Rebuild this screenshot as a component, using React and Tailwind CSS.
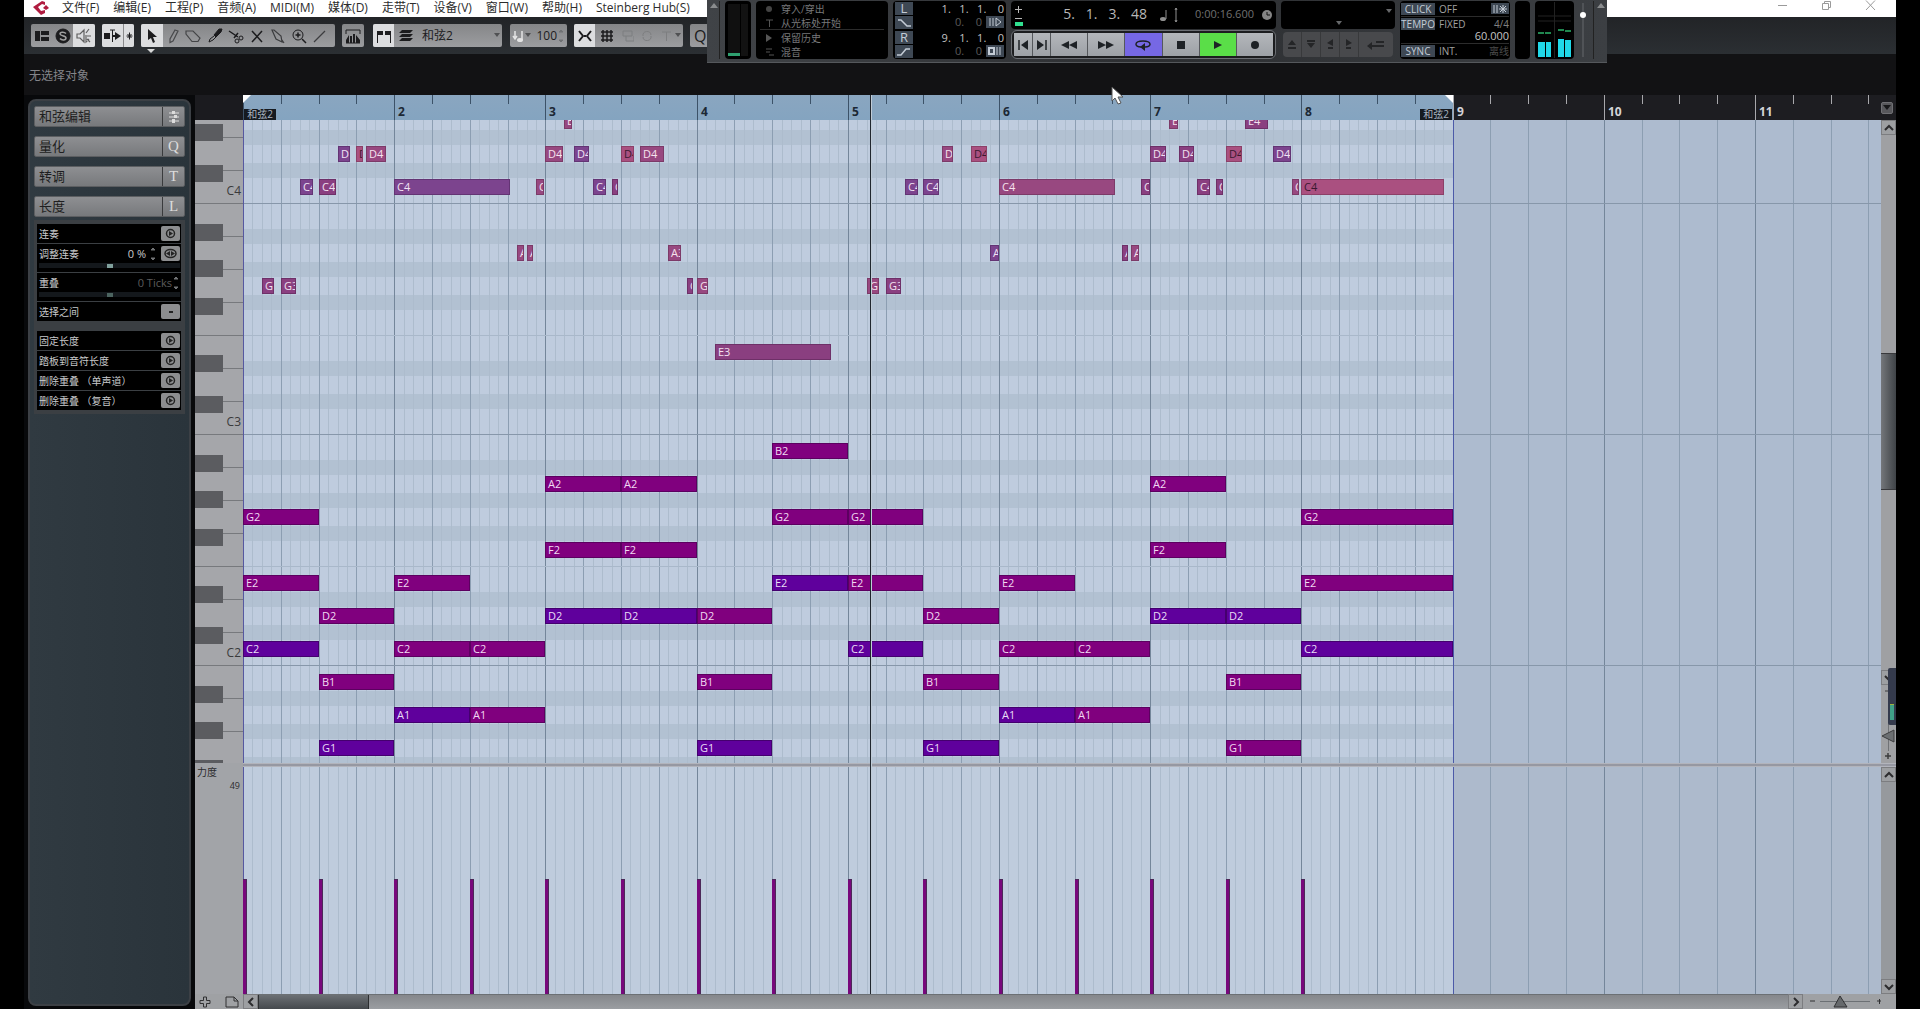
import { useState } from "react";

const STEP = 9.45; // width of one 16th
const toX = (n) => Math.round(n * STEP);
const LOOP_END = 128;
const PLAYHEAD = 66.3;

const MENU = [
  "文件(F)", "编辑(E)", "工程(P)", "音频(A)", "MIDI(M)", "媒体(D)",
  "走带(T)", "设备(V)", "窗口(W)", "帮助(H)", "Steinberg Hub(S)",
];

const ROWS = [
  "E4", "D4", "C4", "B3", "A3", "G3", "F3", "E3", "D3", "C3",
  "B2", "A2", "G2", "F2", "E2", "D2", "C2", "B1", "A1", "G1",
];

// where the black key starts inside the white key above the boundary
const BLACK_TOP = {
  E: "top-[19px]",
  D: "top-[27px]",
  B: "top-[20px]",
  A: "top-[23px]",
  G: "top-[28px]",
};

const COLORS = {
  m: "bg-[#80007e] text-[#f0d8f2] border-[#5c0060]",
  b: "bg-[#5f009c] text-[#e8dcf6] border-[#44006e]",
  v: "bg-[#7c448e] text-[#f0e2f4] border-[#633474]",
  p: "bg-[#8a3f80] text-[#f2e0f0] border-[#6e3068]",
  r: "bg-[#984880] text-[#f6e2ee] border-[#7c3a68]",
  k: "bg-[#aa5080] text-[#3a1830] border-[#8c4068]",
};

// row: [start, length, colour], both counted in 16ths
const NOTES = {
  E4: [[34, 0.8, "r"], [98, 0.9, "r"], [106, 2.45, "p"]],
  D4: [
    [10, 1.3, "v"], [12, 0.65, "k"], [13, 2.1, "r"], [32, 1.9, "r"], [35, 1.65, "v"],
    [40, 1.4, "k"], [42, 2.55, "r"], [74, 1.1, "r"], [77, 1.7, "k"], [96, 1.7, "p"],
    [99, 1.6, "p"], [104, 1.75, "k"], [109, 1.95, "v"],
  ],
  C4: [
    [6, 1.4, "v"], [8, 1.8, "p"], [16, 12.3, "v"], [31, 0.8, "r"], [37, 1.4, "v"],
    [39, 0.65, "p"], [70, 1.45, "v"], [72, 1.6, "v"], [80, 12.3, "r"], [95, 1, "p"],
    [101, 1.3, "p"], [103, 0.7, "p"], [111, 0.7, "r"], [112, 15.1, "k"],
  ],
  A3: [[29, 0.75, "r"], [30, 0.65, "r"], [45, 1.35, "r"], [79, 1, "v"], [93, 0.65, "p"], [94, 0.85, "r"]],
  G3: [[2, 1.3, "p"], [4, 1.6, "p"], [47, 0.65, "p"], [48, 1.2, "r"], [66, 1.3, "r"], [68, 1.6, "p"]],
  E3: [[50, 12.2, "p"]],
  B2: [[56, 8, "m"]],
  A2: [[32, 8, "m"], [40, 8, "m"], [96, 8, "m"]],
  G2: [[0, 8, "m"], [56, 8, "m"], [64, 8, "m"], [112, 16, "m"]],
  F2: [[32, 8, "m"], [40, 8, "m"], [96, 8, "m"]],
  E2: [[0, 8, "m"], [16, 8, "m"], [56, 8, "b"], [64, 8, "m"], [80, 8, "m"], [112, 16, "m"]],
  D2: [
    [8, 8, "m"], [32, 8, "b"], [40, 8, "b"], [48, 8, "m"], [72, 8, "m"], [96, 8, "b"], [104, 8, "b"],
  ],
  C2: [
    [0, 8, "b"], [16, 8, "m"], [24, 8, "m"], [64, 8, "b"], [80, 8, "m"], [88, 8, "m"], [112, 16, "b"],
  ],
  B1: [[8, 8, "m"], [48, 8, "m"], [72, 8, "m"], [104, 8, "m"]],
  A1: [[16, 8, "b"], [24, 8, "m"], [80, 8, "b"], [88, 8, "m"]],
  G1: [[8, 8, "b"], [48, 8, "b"], [72, 8, "b"], [104, 8, "m"]],
};

const BARS = Array.from({ length: 16 }, (_, i) => i);
const HITS = Array.from({ length: 15 }, (_, i) => i * 8);

function Icon({ w = 16, h = 16, children, className = "" }) {
  return (
    <svg
      width={w}
      height={h}
      viewBox={`0 0 ${w} ${h}`}
      fill="none"
      stroke="currentColor"
      className={`shrink-0 ${className}`}
      aria-hidden="true"
    >
      {children}
    </svg>
  );
}

function Tool({ label, active, className = "w-[21px]", children }) {
  return (
    <button
      aria-label={label}
      className={`flex h-full shrink-0 items-center justify-center ${
        active ? "bg-[#dcdddf]" : ""
      } ${className}`}
    >
      {children}
    </button>
  );
}

function Group({ children, className = "" }) {
  return (
    <div
      className={`flex h-[23px] shrink-0 items-center overflow-hidden rounded-xs bg-linear-to-b from-[#858688] to-[#9c9da0] text-[#1c1c1e] ${className}`}
    >
      {children}
    </div>
  );
}

function MenuBar() {
  return (
    <header className="flex h-[17px] shrink-0 items-start bg-white pl-2 text-[#2c2c2c]">
      <Icon w={18} h={15} className="mt-px">
        <path d="M13 1 L10 0 L1 6 L9 14 L13 12 L13 9 L9 10 L6 6 L10 3 L13 4 Z" fill="#b01c40" stroke="none" />
        <path d="M14 4 L17 7 L14 9 L11 7 Z" fill="#b01c40" stroke="none" />
      </Icon>
      <nav className="ml-3 flex gap-[14px] text-[12px] leading-[15px] whitespace-nowrap">
        {MENU.map((m) => (
          <button key={m}>{m}</button>
        ))}
      </nav>
      <div className="ml-auto flex gap-[33px] pr-5 text-[#9a9a9a]">
        <button aria-label="最小化">
          <Icon w={11} h={12}><path d="M1 5.5H10" /></Icon>
        </button>
        <button aria-label="还原">
          <Icon w={11} h={12}><path d="M1.5 3.5h6v6h-6zM3.5 3.500V1.500h6v6H7.500" /></Icon>
        </button>
        <button aria-label="关闭">
          <Icon w={11} h={12}><path d="M1 0.500L10 10M10 0.500L1 10" /></Icon>
        </button>
      </div>
    </header>
  );
}

function Toolbar() {
  return (
    <div className="flex h-[37px] shrink-0 items-start gap-[7px] bg-linear-to-b from-[#222427] to-[#2b2f33] pt-[7px] pl-[7px]">
      <Group className="w-16">
        <Tool label="设置窗口布局">
          <Icon><path d="M1 3h5v10h-5zM7 3h8v4h-8zM7 9h8v4h-8z" fill="currentColor" stroke="none" /></Icon>
        </Tool>
        <Tool label="独奏编辑器">
          <Icon>
            <circle cx="8" cy="8" r="7" fill="#1c1c1e" />
            <path d="M11 5.500C9 3.500 5 4 5 6s6 1.500 6 4-4.500 2.500-6 0.500" stroke="#a0a0a0" strokeWidth="1.500" />
          </Icon>
        </Tool>
        <Tool label="声学反馈" active className="w-[22px]">
          <Icon className="text-[#606060]">
            <path d="M1 6h3l4-4v12l-4-4H1zM10 5l3-4M11 8h4M11 11l3 3M10 7v7l3-3" strokeWidth="1.200" />
          </Icon>
        </Tool>
      </Group>
      <Group className="w-8">
        <Tool label="自动滚动" active>
          <Icon w={18}><path d="M0 5h6v6h-6zM11 4l6 4-6 4zM8 7h3v2h-3z" fill="currentColor" stroke="none" /><path d="M6 2h5M8.500 2v12" /></Icon>
        </Tool>
        <Tool label="滚动选项" active className="w-[11px] border-l border-[#8a8a8c]">
          <Icon w={7} h={8}><path d="M3.500 0.500v7M0.500 4h6M1.500 2l4 4M5.500 2l-4 4" /></Icon>
        </Tool>
      </Group>
      <div className="relative">
        <Group className="w-[194px]">
          <Tool label="对象选择" active className="w-[22px]">
            <Icon w={12}><path d="M2 1v11l3-2 2 5 2-1-2-5h4z" fill="currentColor" stroke="none" /></Icon>
          </Tool>
          <Tool label="画笔" className="w-[19px]">
            <Icon w={14} className="text-[#48494b]"><path d="M9 2l3 1-5 10-3 1.500V11z" strokeWidth="1.200" /></Icon>
          </Tool>
          <Tool label="橡皮擦" className="w-[22px]">
            <Icon w={18} className="text-[#444547]"><path d="M2 3h7l7 7-2 3.500H8L2 6z" strokeWidth="1.200" /></Icon>
          </Tool>
          <Tool label="修剪" className="w-[21px]">
            <Icon><path d="M15 1l-3 0-5 6 2 2 5-5z" fill="currentColor" /><path d="M7 8l-4 3-1 3 4-2 3-3" /></Icon>
          </Tool>
          <Tool label="分割">
            <Icon><path d="M1 3l9 6M6 10l4-5" strokeWidth="1.500" /><circle cx="13" cy="10" r="2" /><circle cx="9" cy="13" r="2" /></Icon>
          </Tool>
          <Tool label="静音"><Icon><path d="M3 3l10 11M13 3L3 14" strokeWidth="1.500" /></Icon></Tool>
          <Tool label="胶合">
            <Icon className="text-[#3c3d3f]"><path d="M2 2l2 0 7 6 1 6-6-3zM12 12l2 3" strokeWidth="1.200" /></Icon>
          </Tool>
          <Tool label="缩放">
            <Icon><circle cx="7" cy="7" r="5" /><path d="M7 4.500v5M4.500 7h5M11 11l4 4" strokeWidth="1.500" /></Icon>
          </Tool>
          <Tool label="直线"><Icon className="text-[#3c3d3f]"><path d="M2 14L13 3" strokeWidth="1.200" /></Icon></Tool>
        </Group>
        <Icon w={8} h={5} className="absolute top-[25px] left-[6px]">
          <path d="M0 0h8L4 4z" fill="#d8d8d8" stroke="none" />
        </Icon>
      </div>
      <Group className="w-[22px]">
        <Tool label="显示控制器">
          <Icon w={18} h={18}>
            <path d="M2 7V3h14v4M2 16h14" />
            <path d="M2 13l3-5v8h-3zM6 9h2v7h-2zM9 7h2v9h-2zM12 8l4 5v3h-4z" fill="currentColor" stroke="none" />
          </Icon>
        </Tool>
      </Group>
      <Group className="ml-[2px] w-[129px]">
        <Tool label="显示部分边界" active>
          <Icon><path d="M1 3h6v4h-5v8h-1zM9 3h6v12h-1v-8h-5z" fill="currentColor" stroke="none" /></Icon>
        </Tool>
        <Tool label="编辑活动部分" className="w-6">
          <Icon><path d="M4 2h11l-3 3H1zM4 6h11l-3 3H1zM4 10h11l-3 3H1z" fill="currentColor" stroke="none" /></Icon>
        </Tool>
        <select aria-label="当前部分" className="h-full min-w-0 flex-1 appearance-none pl-1 text-[12px]">
          <option>和弦2</option>
        </select>
        <Caret />
      </Group>
      <Group className="ml-px w-[57px] gap-px px-[2px]">
        <Icon w={12}>
          <path d="M3 3v7M1 8l2 3 2-3M10 3v9" stroke="#e4e4e4" strokeWidth="1.500" />
          <ellipse cx="8" cy="12" rx="3" ry="2" fill="#e4e4e4" stroke="none" />
        </Icon>
        <Caret />
        <input aria-label="插入力度" defaultValue="100" className="min-w-0 flex-1 bg-transparent text-right text-[12px]" />
        <Spin />
      </Group>
      <Group className="w-[109px]">
        <Tool label="吸附" active>
          <Icon><path d="M2 3l4 5-4 5M14 3l-4 5 4 5M8 7v2" strokeWidth="2" /></Icon>
        </Tool>
        <Tool label="网格" className="w-6">
          <Icon><path d="M4 2v12M8 2v12M12 2v12M2 4h12M2 8h12M2 12h12" strokeWidth="1.500" /></Icon>
        </Tool>
        <div className="flex flex-1 items-center justify-around text-[#7d7e80]">
          <Icon w={12}><path d="M1 3h9v5h-9zM4 8v5h8V8" /></Icon>
          <Icon w={12}><path d="M2 8a4 4 0 0 1 8-1M10 8a4 4 0 0 1-8 1" /></Icon>
          <Icon w={12}><path d="M2 4h9M6.500 4v9" /></Icon>
        </div>
        <Caret />
      </Group>
      <Group className="w-8 pl-1 text-[16px] leading-[20px]">
        <button>Q</button>
      </Group>
    </div>
  );
}

function Caret() {
  return (
    <Icon w={7} h={5} className="mr-px">
      <path d="M0 0h6L3 4z" fill="#505153" stroke="none" />
    </Icon>
  );
}

function Spin() {
  return (
    <Icon w={7} h={14} className="text-[#707274]">
      <path d="M1 3l2-2 2 2zM1 11h4l-2 2z" fill="currentColor" />
    </Icon>
  );
}

const LCD = "rounded-sm bg-black";
const TAG = "flex items-center justify-center bg-[#3e4854] text-[#c4ccd6]";

function Locator({ name, value, curve, children }) {
  return (
    <div className="flex h-[28px] gap-1">
      <div className="flex w-[18px] flex-col gap-px">
        <button className={`${TAG} h-[13px] text-[13px] leading-[13px]`}>{name}</button>
        <button aria-label={`${name} 预卷`} className={`${TAG} h-[13px]`}>
          <Icon w={14} h={10}><path d={curve} strokeWidth="1.500" /></Icon>
        </button>
      </div>
      <div className="flex flex-1 flex-col text-right text-[11px] leading-[13px] whitespace-pre">
        <span className="text-[#c0c0c0]">{value}</span>
        <span className="flex items-center justify-end gap-1 text-[#5c5c5c]">
          0.{"    "}0
          <button aria-label={`${name} 开关`} className={`${TAG} h-3 w-[18px]`}>{children}</button>
        </span>
      </div>
    </div>
  );
}

function Transport() {
  const [playing, setPlaying] = useState(true);
  const [cycle, setCycle] = useState(true);
  const key =
    "flex h-full items-center justify-center border-r border-[#55585c] text-[#1e2226] last:border-r-0";
  const plain = "bg-linear-to-b from-[#b4b7bb] to-[#9da1a6]";

  return (
    <section
      aria-label="走带控制"
      className="absolute top-0 left-[707px] z-30 flex h-[63px] w-[900px] gap-[5px] border-b border-[#55585c] bg-linear-to-r from-[#404347] via-[#2c2e31] to-[#3c3f43] pt-px pb-[3px]"
    >
      <div className="w-[13px] border-r border-[#222]">
        <Icon w={8} h={8} className="ml-[3px]"><path d="M0 7h8L4 2z" fill="#8a8c8e" stroke="none" /></Icon>
      </div>
      <div className={`${LCD} flex w-[26px] items-end gap-px p-[3px]`}>
        <div className="flex h-full w-3 items-end bg-[#101010]">
          <div className="h-[3px] w-full bg-[#2fa070]" />
        </div>
        <div className="h-full flex-1 bg-[#121212]" />
      </div>
      <div className={`${LCD} flex w-[132px] flex-col px-1 text-[10px] leading-[14px] text-[#77787a]`}>
        <div className="flex h-[15px] items-center gap-[5px] pt-px pl-1">
          <Icon w={12} h={10}><circle cx="5" cy="5" r="3" fill="#444" stroke="none" /></Icon>穿入/穿出
        </div>
        <div className="flex h-[14px] items-center gap-[5px] border-b border-[#2c2c2c] pl-1">
          <Icon w={12} h={10} className="text-[#555]"><path d="M2 2h7M5.500 2v7" /></Icon>从光标处开始
        </div>
        <div className="flex h-[15px] items-center gap-[5px] pl-1">
          <Icon w={12} h={10}><path d="M2 1l6 4-6 4z" fill="#555" stroke="none" /></Icon>保留历史
        </div>
        <div className="flex h-[14px] items-center gap-[5px] pl-1">
          <Icon w={12} h={10} className="text-[#555]"><path d="M2 2h6M2 5h4M5 8h5" /></Icon>混音
        </div>
      </div>
      <div className={`${LCD} flex w-[113px] flex-col gap-px px-[2px] pt-px`}>
        <Locator name="L" value="1.   1.   1.    0" curve="M1 2h3l6 6h4">
          <Icon w={14} h={10}><path d="M2 1v8M5 1v8M8 1v8l5-4z" /></Icon>
        </Locator>
        <Locator name="R" value="9.   1.   1.    0" curve="M0 8h4l5-6h4">
          <Icon w={14} h={10}><path d="M1 2h5v6h-5z" strokeWidth="2" /><path d="M9 1v8M12 1v8" /></Icon>
        </Locator>
      </div>
      <div className="flex w-[265px] flex-col gap-px">
        <div className={`${LCD} flex h-[28px] items-center gap-3 px-1 text-[#b8b8b8]`}>
          <Icon w={8} h={28}>
            <path d="M0 8.500h7M3.500 5v7M0 17.500h7" />
            <path d="M0 21h8v4h-8z" fill="#30e090" stroke="none" />
          </Icon>
          <span className="ml-auto pb-[3px] text-[14px] leading-[20px] whitespace-pre">5.   1.   3.   48</span>
          <Icon w={20} h={20}>
            <ellipse cx="4" cy="14" rx="3" ry="2" fill="#909090" stroke="none" />
            <path d="M7 14V5M17 3v14M16 5l1-2 1 2M16 15l1 2 1-2" stroke="#909090" />
          </Icon>
          <span className="pr-1 pb-[2px] pl-1 text-[11px] leading-[14px] text-[#707070]">0:00:16.600</span>
          <Icon w={10} h={10} className="-ml-2">
            <circle cx="5" cy="5" r="5" fill="#858585" stroke="none" />
            <path d="M5 2v3h3" stroke="#111" />
          </Icon>
        </div>
        <div className="flex h-[29px] rounded-md border border-[#6c6f74] bg-[#1c1d1f] p-[2px]">
          <button aria-label="上一标记" className={`${key} ${plain} w-[19px]`}>
            <Icon w={12} h={10}><path d="M2 0v10" strokeWidth="1.500" /><path d="M11 0v10L4 5z" fill="currentColor" stroke="none" /></Icon>
          </button>
          <button aria-label="下一标记" className={`${key} ${plain} w-[18px]`}>
            <Icon w={12} h={10}><path d="M10 0v10" strokeWidth="1.500" /><path d="M1 0v10l7-5z" fill="currentColor" stroke="none" /></Icon>
          </button>
          <button aria-label="倒带" className={`${key} ${plain} flex-1`}>
            <Icon w={16} h={8}><path d="M8 0v8L0 4zM16 0v8L8 4z" fill="currentColor" stroke="none" /></Icon>
          </button>
          <button aria-label="快进" className={`${key} ${plain} flex-1`}>
            <Icon w={16} h={8}><path d="M0 0v8l8-4zM8 0v8l8-4z" fill="currentColor" stroke="none" /></Icon>
          </button>
          <button
            aria-label="循环"
            onClick={() => setCycle(!cycle)}
            className={`${key} flex-1 ${cycle ? "bg-[#7668e4]" : plain}`}
          >
            <Icon w={16} h={12}>
              <path d="M6 8C-1 8-1 2 8 2s9 6 2 6" strokeWidth="1.500" />
              <path d="M5 8l5-4v8z" fill="currentColor" stroke="none" />
            </Icon>
          </button>
          <button aria-label="停止" onClick={() => setPlaying(false)} className={`${key} ${plain} flex-1`}>
            <Icon w={8} h={8}><path d="M0 0h8v8h-8z" fill="currentColor" stroke="none" /></Icon>
          </button>
          <button
            aria-label="播放"
            onClick={() => setPlaying(true)}
            className={`${key} flex-1 ${playing ? "bg-[#5ade48]" : plain}`}
          >
            <Icon w={8} h={8}><path d="M0 0v8l8-4z" fill="currentColor" stroke="none" /></Icon>
          </button>
          <button aria-label="录音" className={`${key} ${plain} flex-1`}>
            <Icon w={8} h={8}><circle cx="4" cy="4" r="4" fill="currentColor" stroke="none" /></Icon>
          </button>
        </div>
      </div>
      <div className="flex w-[114px] flex-col gap-[3px]">
        <div className={`${LCD} flex h-[28px] items-end justify-end pr-px`}>
          <Icon w={60} h={26}><path d="M52 6h6l-3 4zM2 18h6l-3 4z" fill="#66686a" stroke="none" /></Icon>
        </div>
        <div className="mx-[2px] flex h-[25px] rounded-sm bg-[#48494c] text-[#242527]">
          {[
            ["上移", "M1 6h8L5 1zM1 8h8v2h-8z"],
            ["下移", "M1 1h8v2h-8zM1 4h8l-4 5z"],
            ["左移", "M8 0v7L2 4zM3 8h5v2h-5z"],
            ["右移", "M2 0v7l6-3zM2 8h5v2h-5z"],
          ].map(([label, d]) => (
            <button key={label} aria-label={label} className="flex w-[19px] items-center justify-center border-r border-[#38393b]">
              <Icon w={10} h={11}><path d={d} fill="currentColor" stroke="none" /></Icon>
            </button>
          ))}
          <button aria-label="返回" className="flex flex-1 items-center justify-center">
            <Icon w={18} h={10}><path d="M3 6h14M9 2h8" strokeWidth="2" /><path d="M0 6l5-4v8z" fill="currentColor" stroke="none" /></Icon>
          </button>
        </div>
      </div>
      <div className={`${LCD} flex w-[110px] flex-col px-px pt-[2px] text-[10px] leading-[12px] text-[#a0a0a0]`}>
        <div className="flex h-[14px] items-start gap-1 border-b border-[#2c2c2c]">
          <button className={`${TAG} h-3 w-[34px]`}>CLICK</button>OFF
          <button aria-label="预备拍" className={`${TAG} ml-auto h-[11px] w-[18px]`}>
            <Icon w={16} h={10}><path d="M2 1v8M5 1v8M11 1v8M7 5h8M8 2l6 6M14 2l-6 6" /></Icon>
          </button>
        </div>
        <div className="flex h-[27px] items-start gap-1 border-b border-[#2c2c2c] pt-px">
          <button className={`${TAG} h-3 w-[34px]`}>TEMPO</button>FIXED
          <div className="ml-auto flex flex-col text-right">
            <span className="text-[#808080]">4/4</span>
            <span className="text-[11px] text-[#c4c4c4]">60.000</span>
          </div>
        </div>
        <div className="flex items-start gap-1 pt-px">
          <button className={`${TAG} h-3 w-[34px]`}>SYNC</button>INT.
          <span className="ml-auto text-[#4c4c4c]">离线</span>
        </div>
      </div>
      <div className={`${LCD} w-[15px]`} />
      <div className={`${LCD} w-[39px]`}>
        <svg viewBox="0 0 39 58" className="h-full w-full" aria-hidden="true">
          <path d="M3 15h33M3 20h33M19.500 1v56" stroke="#222" />
          <path d="M3 41h7v15H3zM11 41h5v15h-5zM23 38h6v18h-6zM30 39h6v17h-6z" fill="#20d8e8" />
          <path d="M3 32h6M10 32h6M23 29h6M30 30h6" stroke="#208850" strokeWidth="2" />
        </svg>
      </div>
      <div className="flex flex-1">
        <Icon w={10} h={58}>
          <path d="M4 2v54" stroke="#66686c" />
          <circle cx="4" cy="14" r="3" fill="#fff" stroke="none" />
        </Icon>
        <div className="ml-1 flex-1 border-l border-[#222]">
          <Icon w={8} h={8} className="mx-auto"><path d="M0 7h8L4 2z" fill="#8a8c8e" stroke="none" /></Icon>
        </div>
      </div>
    </section>
  );
}

function RoundButton({ label, kind = "play" }) {
  return (
    <button
      aria-label={label}
      className="flex h-[15px] w-[19px] shrink-0 items-center justify-center rounded-xs bg-[#8c8d8f] text-[#242424]"
    >
      {kind === "play" && (
        <Icon w={11} h={11}><circle cx="5.500" cy="5.500" r="4" strokeWidth="1.500" /><path d="M4 3l4 2.500L4 8z" fill="currentColor" stroke="none" /></Icon>
      )}
      {kind === "both" && (
        <Icon w={13} h={11}><ellipse cx="6.500" cy="5.500" rx="5.500" ry="4" strokeWidth="1.500" /><path d="M6 3v5L2 5.500zM7 3v5l4-2.500z" fill="currentColor" stroke="none" /></Icon>
      )}
      {kind === "menu" && <span className="h-[2px] w-1 bg-[#242424]" />}
    </button>
  );
}

const RANGE =
  "h-[5px] w-full appearance-none bg-[#14181c] [&::-webkit-slider-thumb]:h-1 [&::-webkit-slider-thumb]:w-[6px] [&::-webkit-slider-thumb]:appearance-none";

function Inspector() {
  return (
    <aside className="flex w-[171px] shrink-0 bg-[#08090b] pt-1 pr-1 pb-[3px] pl-1">
      <div className="flex flex-1 flex-col rounded-lg border-2 border-[#3c4045] bg-linear-to-r from-[#303a41] to-[#2a343b] px-1 pt-[5px]">
        <div className="flex flex-col gap-[9px]">
          {[["和弦编辑", ""], ["量化", "Q"], ["转调", "T"], ["长度", "L"]].map(([name, mark]) => (
            <button
              key={name}
              className="flex h-[21px] items-center rounded-xs border border-[#5c5e61] bg-linear-to-b from-[#8e8f92] to-[#77797c] text-[#1e1e20]"
            >
              <span className="flex-1 pl-1 text-left text-[13px] leading-[19px]">{name}</span>
              <span className="flex h-full w-[22px] items-center justify-center border-l border-[#3a3b3d] font-['Liberation_Serif',serif] text-[15px] text-[#dcdcdc]">
                {mark || (
                  <Icon w={12} h={14}>
                    <path d="M1 3h10M1 7h10M1 11h10" />
                    <path d="M4 1h3v3h-3zM6 5h3v3h-3zM4 9h3v4h-3z" fill="currentColor" stroke="none" />
                  </Icon>
                )}
              </span>
            </button>
          ))}
        </div>
        <div className="mt-[3px] flex flex-col gap-[10px] bg-[#3b3f43] py-1 pr-1 pl-[3px] text-[10px] leading-[14px] text-[#c8cacc]">
          <div className="flex flex-col gap-px">
            <div className="flex h-[19px] items-center justify-between bg-black pr-px pl-[2px]">
              连奏
              <RoundButton label="应用连奏" />
            </div>
            <div className="flex h-7 flex-col bg-black pr-px pl-[2px]">
              <div className="flex h-[19px] items-center gap-1">
                <label htmlFor="legato" className="flex-1">调整连奏</label>
                <span className="text-[11px]">0 %</span>
                <Spin />
                <RoundButton label="连奏方向" kind="both" />
              </div>
              <input id="legato" type="range" className={`${RANGE} [&::-webkit-slider-thumb]:bg-[#80a09c]`} />
            </div>
            <div className="flex h-7 flex-col bg-black pr-px pl-[2px]">
              <div className="flex h-[19px] items-center gap-px">
                <label htmlFor="overlap" className="flex-1">重叠</label>
                <span className="text-[11px] text-[#5c5c5c]">0 Ticks</span>
                <Spin />
              </div>
              <input id="overlap" type="range" className={`${RANGE} [&::-webkit-slider-thumb]:bg-[#4c6460]`} />
            </div>
            <div className="flex h-[19px] items-center justify-between bg-black pr-px pl-[2px]">
              选择之间
              <RoundButton label="选择之间" kind="menu" />
            </div>
          </div>
          <div className="flex flex-col gap-px">
            {["固定长度", "踏板到音符长度", "删除重叠 （单声道）", "删除重叠 （复音）"].map((t) => (
              <div key={t} className="flex h-[19px] items-center justify-between bg-black pr-px pl-[2px]">
                {t}
                <RoundButton label={t} />
              </div>
            ))}
          </div>
        </div>
      </div>
    </aside>
  );
}

function Ruler() {
  return (
    <div className="relative h-full flex-1 overflow-hidden bg-[#1d1d21]">
      <div
        className="absolute inset-y-0 left-0 bg-linear-to-b from-[#8aa6c0] to-[#84a4c0]"
        style={{ width: toX(LOOP_END) }}
      />
      {BARS.map((bar) => {
        const inLoop = bar < 8;
        return (
          <div key={bar}>
            {[0, 1, 2, 3].map((beat) => (
              <div
                key={beat}
                className={`absolute top-0 w-px ${beat === 0 ? "h-full" : "h-[9px]"} ${
                  inLoop ? "bg-[#3c5268]" : "bg-[#a8a8ac]"
                }`}
                style={{ left: toX(bar * 16 + beat * 4) }}
              />
            ))}
            {bar > 0 && (
              <span
                className={`absolute top-[9px] pl-1 text-[12px] leading-[16px] font-bold ${
                  inLoop ? "text-[#1c2834]" : "text-[#d4d4d8]"
                }`}
                style={{ left: toX(bar * 16) }}
              >
                {bar + 1}
              </span>
            )}
          </div>
        );
      })}
      <span className="absolute bottom-0 left-px w-8 bg-[#151a20] text-center text-[10px] leading-[11px] text-[#a8b4c0]">
        和弦2
      </span>
      <span
        className="absolute bottom-0 w-8 -translate-x-full bg-[#151a20] text-center text-[10px] leading-[11px] text-[#a8b4c0]"
        style={{ left: toX(LOOP_END) - 1 }}
      >
        和弦2
      </span>
      <Icon w={8} h={8} className="absolute top-0 left-0"><path d="M0 0h8L0 8z" fill="#fff" stroke="none" /></Icon>
      <svg width="8" height="8" className="absolute top-0 -translate-x-full" style={{ left: toX(LOOP_END) }} aria-hidden="true">
        <path d="M0 0h8v8z" fill="#fff" />
      </svg>
    </div>
  );
}

function GridLines() {
  const lines = [];
  for (let i = 0; i < BARS.length * 16; i++) {
    const beat = i % 4 === 0;
    if (!beat && i > LOOP_END) continue;
    lines.push(
      <div
        key={i}
        className={`absolute inset-y-0 w-px ${
          i % 16 === 0 ? "bg-[#74869a]" : beat ? "bg-[#8c9eb2]" : "bg-[#adbccd]"
        }`}
        style={{ left: toX(i) }}
      />
    );
  }
  return lines;
}

function LoopEdges() {
  return (
    <>
      <div className="absolute inset-y-0 left-0 w-px bg-[#5658a0]" />
      <div className="absolute inset-y-0 w-px bg-[#4c5aa8]" style={{ left: toX(LOOP_END) }} />
    </>
  );
}

function Note({ name, start, length, color }) {
  const left = toX(start);
  return (
    <div
      className={`absolute top-[8px] z-10 h-4 overflow-hidden border pl-[2px] text-[11px] leading-[14px] ${COLORS[color]}`}
      style={{ left, width: toX(start + length) - left }}
    >
      {name}
    </div>
  );
}

function NoteGrid() {
  return (
    <div className="relative flex-1 overflow-hidden bg-[#adbbcf]">
      <div className="absolute inset-y-0 left-0 bg-[#bfccde]" style={{ width: toX(LOOP_END) }} />
      <div className="absolute inset-x-0 top-0 -mt-[15px]">
        {ROWS.map((row) => (
          <div key={row} className="relative h-[33px]">
            {BLACK_TOP[row[0]] && (
              <div className="absolute top-[25px] left-0 h-[15px] bg-[#b2c1d2]" style={{ width: toX(LOOP_END) }} />
            )}
          </div>
        ))}
      </div>
      <GridLines />
      <div className="absolute inset-x-0 top-0 -mt-[15px]">
        {ROWS.map((row) => (
          <div key={row} className="relative h-[33px]">
            {row[0] === "C" && <div className="absolute inset-x-0 bottom-0 h-px bg-[#8797aa]" />}
            {row[0] === "F" && (
              <div className="absolute bottom-0 left-0 h-px bg-[#a9b8ca]" style={{ width: toX(LOOP_END) }} />
            )}
            {(NOTES[row] || []).map(([start, length, color]) => (
              <Note key={start} name={row} start={start} length={length} color={color} />
            ))}
          </div>
        ))}
      </div>
      <LoopEdges />
    </div>
  );
}

function Piano() {
  return (
    <div className="w-12 shrink-0 overflow-hidden bg-[#a5a6aa]">
      <div className="-mt-[15px]">
        {ROWS.map((row) => {
          const black = BLACK_TOP[row[0]];
          return (
            <div key={row} className="relative h-[33px] border-b border-[#77797d]">
              {row[0] === "C" && (
                <span className="absolute right-[2px] bottom-[5px] text-[12px] leading-[15px] text-[#3a3a3c]">{row}</span>
              )}
              {black && <div className={`absolute left-0 z-10 h-[17px] w-7 bg-[#5b5c60] ${black}`} />}
            </div>
          );
        })}
      </div>
    </div>
  );
}

function VelocityLane() {
  return (
    <div className="relative flex-1 overflow-hidden bg-[#adbacc]">
      <div className="absolute inset-y-0 left-0 bg-[#bfccdd]" style={{ width: toX(LOOP_END) }} />
      <GridLines />
      <LoopEdges />
      {HITS.map((h) => (
        <div
          key={h}
          className="absolute bottom-0 h-[115px] w-[4px] border-t border-r border-[#4c2858] bg-[#78087c]"
          style={{ left: toX(h) }}
        />
      ))}
    </div>
  );
}

const CHEVRONS = {
  up: "M2 7l4-4 4 4",
  down: "M2 3l4 4 4-4",
  left: "M8 1L4 5l4 4",
  right: "M4 1l4 4-4 4",
};

function ScrollButton({ dir, label }) {
  return (
    <button
      aria-label={label}
      className="flex h-[15px] w-[15px] shrink-0 items-center justify-center border border-[#7c7d80] bg-[#9d9fa2] text-[#2c2c2e]"
    >
      <Icon w={12} h={10}><path d={CHEVRONS[dir]} strokeWidth="2" /></Icon>
    </button>
  );
}

function Editor() {
  return (
    <main className="relative flex min-w-0 flex-1 flex-col">
      <div className="flex h-[25px] shrink-0">
        <div className="w-12 shrink-0 bg-[#1b1b1f]" />
        <Ruler />
        <div className="flex w-[15px] items-center bg-[#1d1d21]">
          <button aria-label="标尺选项" className="flex h-3 w-3 items-center justify-center rounded-xs border border-[#707074] bg-[#58585c]">
            <Icon w={8} h={5}><path d="M0 0h8L4 5z" fill="#18181a" stroke="none" /></Icon>
          </button>
        </div>
      </div>

      <div className="flex min-h-0 flex-1">
        <Piano />
        <NoteGrid />
        <div className="relative flex w-[15px] flex-col bg-[#9fa0a3]">
          <ScrollButton dir="up" label="向上滚动" />
          <div className="flex-1">
            <div className="mt-[218px] h-[137px] border-y border-[#38393c] bg-linear-to-r from-[#74777b] to-[#3f4347]" />
          </div>
          <ScrollButton dir="down" label="向下滚动" />
          <Icon w={15} h={78} className="text-[#3c3c3e]">
            <path d="M4 6h6" />
            <path d="M7.500 12v54" stroke="#707276" />
            <path d="M1 51l12-6v12z" fill="#6c6f72" />
            <path d="M4 71h6M7 68v6" strokeWidth="1.500" />
          </Icon>
          <div className="absolute right-0 bottom-[38px] flex h-[57px] w-2 items-end rounded-l-xs bg-[#343a4c] p-[2px] pb-[5px]">
            <div className="h-4 w-1 border-t border-[#a0b040] bg-[#40a088]" />
          </div>
        </div>
      </div>

      <div className="ml-12 h-1 shrink-0 border-y border-[#b2b4bc] bg-[#9698a2]" />

      <div className="flex h-[227px] shrink-0">
        <div className="-mt-1 w-12 shrink-0 bg-[#a2a4a8] pt-[2px] text-[#2c2c2e]">
          <p className="pl-[2px] text-[10px] leading-[14px]">力度</p>
          <p className="pt-px pr-[3px] text-right text-[9px] leading-[12px]">49</p>
        </div>
        <VelocityLane />
        <div className="flex w-[15px] flex-col justify-between bg-[#96999d]">
          <ScrollButton dir="up" label="力度上滚" />
          <ScrollButton dir="down" label="力度下滚" />
        </div>
      </div>

      <div className="flex h-[15px] shrink-0 bg-[#9fa1a4] text-[#303133]">
        <div className="flex w-12 items-center justify-between px-1">
          <button aria-label="添加控制器轨">
            <Icon w={12} h={12}><path d="M4.500 1h3v3.500h3.500v3h-3.500V11h-3V7.500H1v-3h3.500z" /></Icon>
          </button>
          <button aria-label="控制器预设">
            <Icon w={14} h={12}><path d="M1 1h8l4 4v6H1zM9 1v4h4" /></Icon>
          </button>
        </div>
        <ScrollButton dir="left" label="向左滚动" />
        <div className="flex flex-1 border-t border-[#6c7074] bg-linear-to-b from-[#85878b] to-[#9b9ea2]">
          <div className="w-[111px] border-x border-[#2c2e30] bg-linear-to-b from-[#6c7074] to-[#45494d]" />
        </div>
        <ScrollButton dir="right" label="向右滚动" />
        <Icon w={75} h={15} className="ml-[3px]">
          <path d="M4 7h5M71 7h5M73.500 5v5" />
          <path d="M14 7.500h50" stroke="#6c7074" />
          <path d="M28 13l6-11 7 11z" fill="#66696c" />
        </Icon>
        <div className="w-[15px]" />
      </div>

      <div className="pointer-events-none absolute top-0 bottom-[15px] left-12 z-20">
        <div
          className="relative h-full w-[2px] border-r border-[#c0ccd8] bg-[#20262e]"
          style={{ left: toX(PLAYHEAD) }}
        />
      </div>
    </main>
  );
}

export default function App() {
  return (
    <div className="bg-black px-6 font-['Open_Sans','Noto_Sans_CJK_SC',sans-serif]">
      <div className="relative flex h-screen flex-col overflow-hidden bg-[#121214]">
        <MenuBar />
        <Toolbar />
        <div className="h-[41px] shrink-0 bg-[#121214] pt-[13px] pl-[5px] text-[12px] leading-[18px] text-[#84858a]">
          无选择对象
        </div>
        <div className="flex min-h-0 flex-1">
          <Inspector />
          <Editor />
        </div>
      </div>
      <Transport />
      <svg width="14" height="20" className="pointer-events-none absolute top-[86px] left-[1111px] z-40" aria-hidden="true">
        <path d="M1 1v14l3-3 3 6 3-1-3-6h5z" fill="#fff" stroke="#555" />
      </svg>
    </div>
  );
}
